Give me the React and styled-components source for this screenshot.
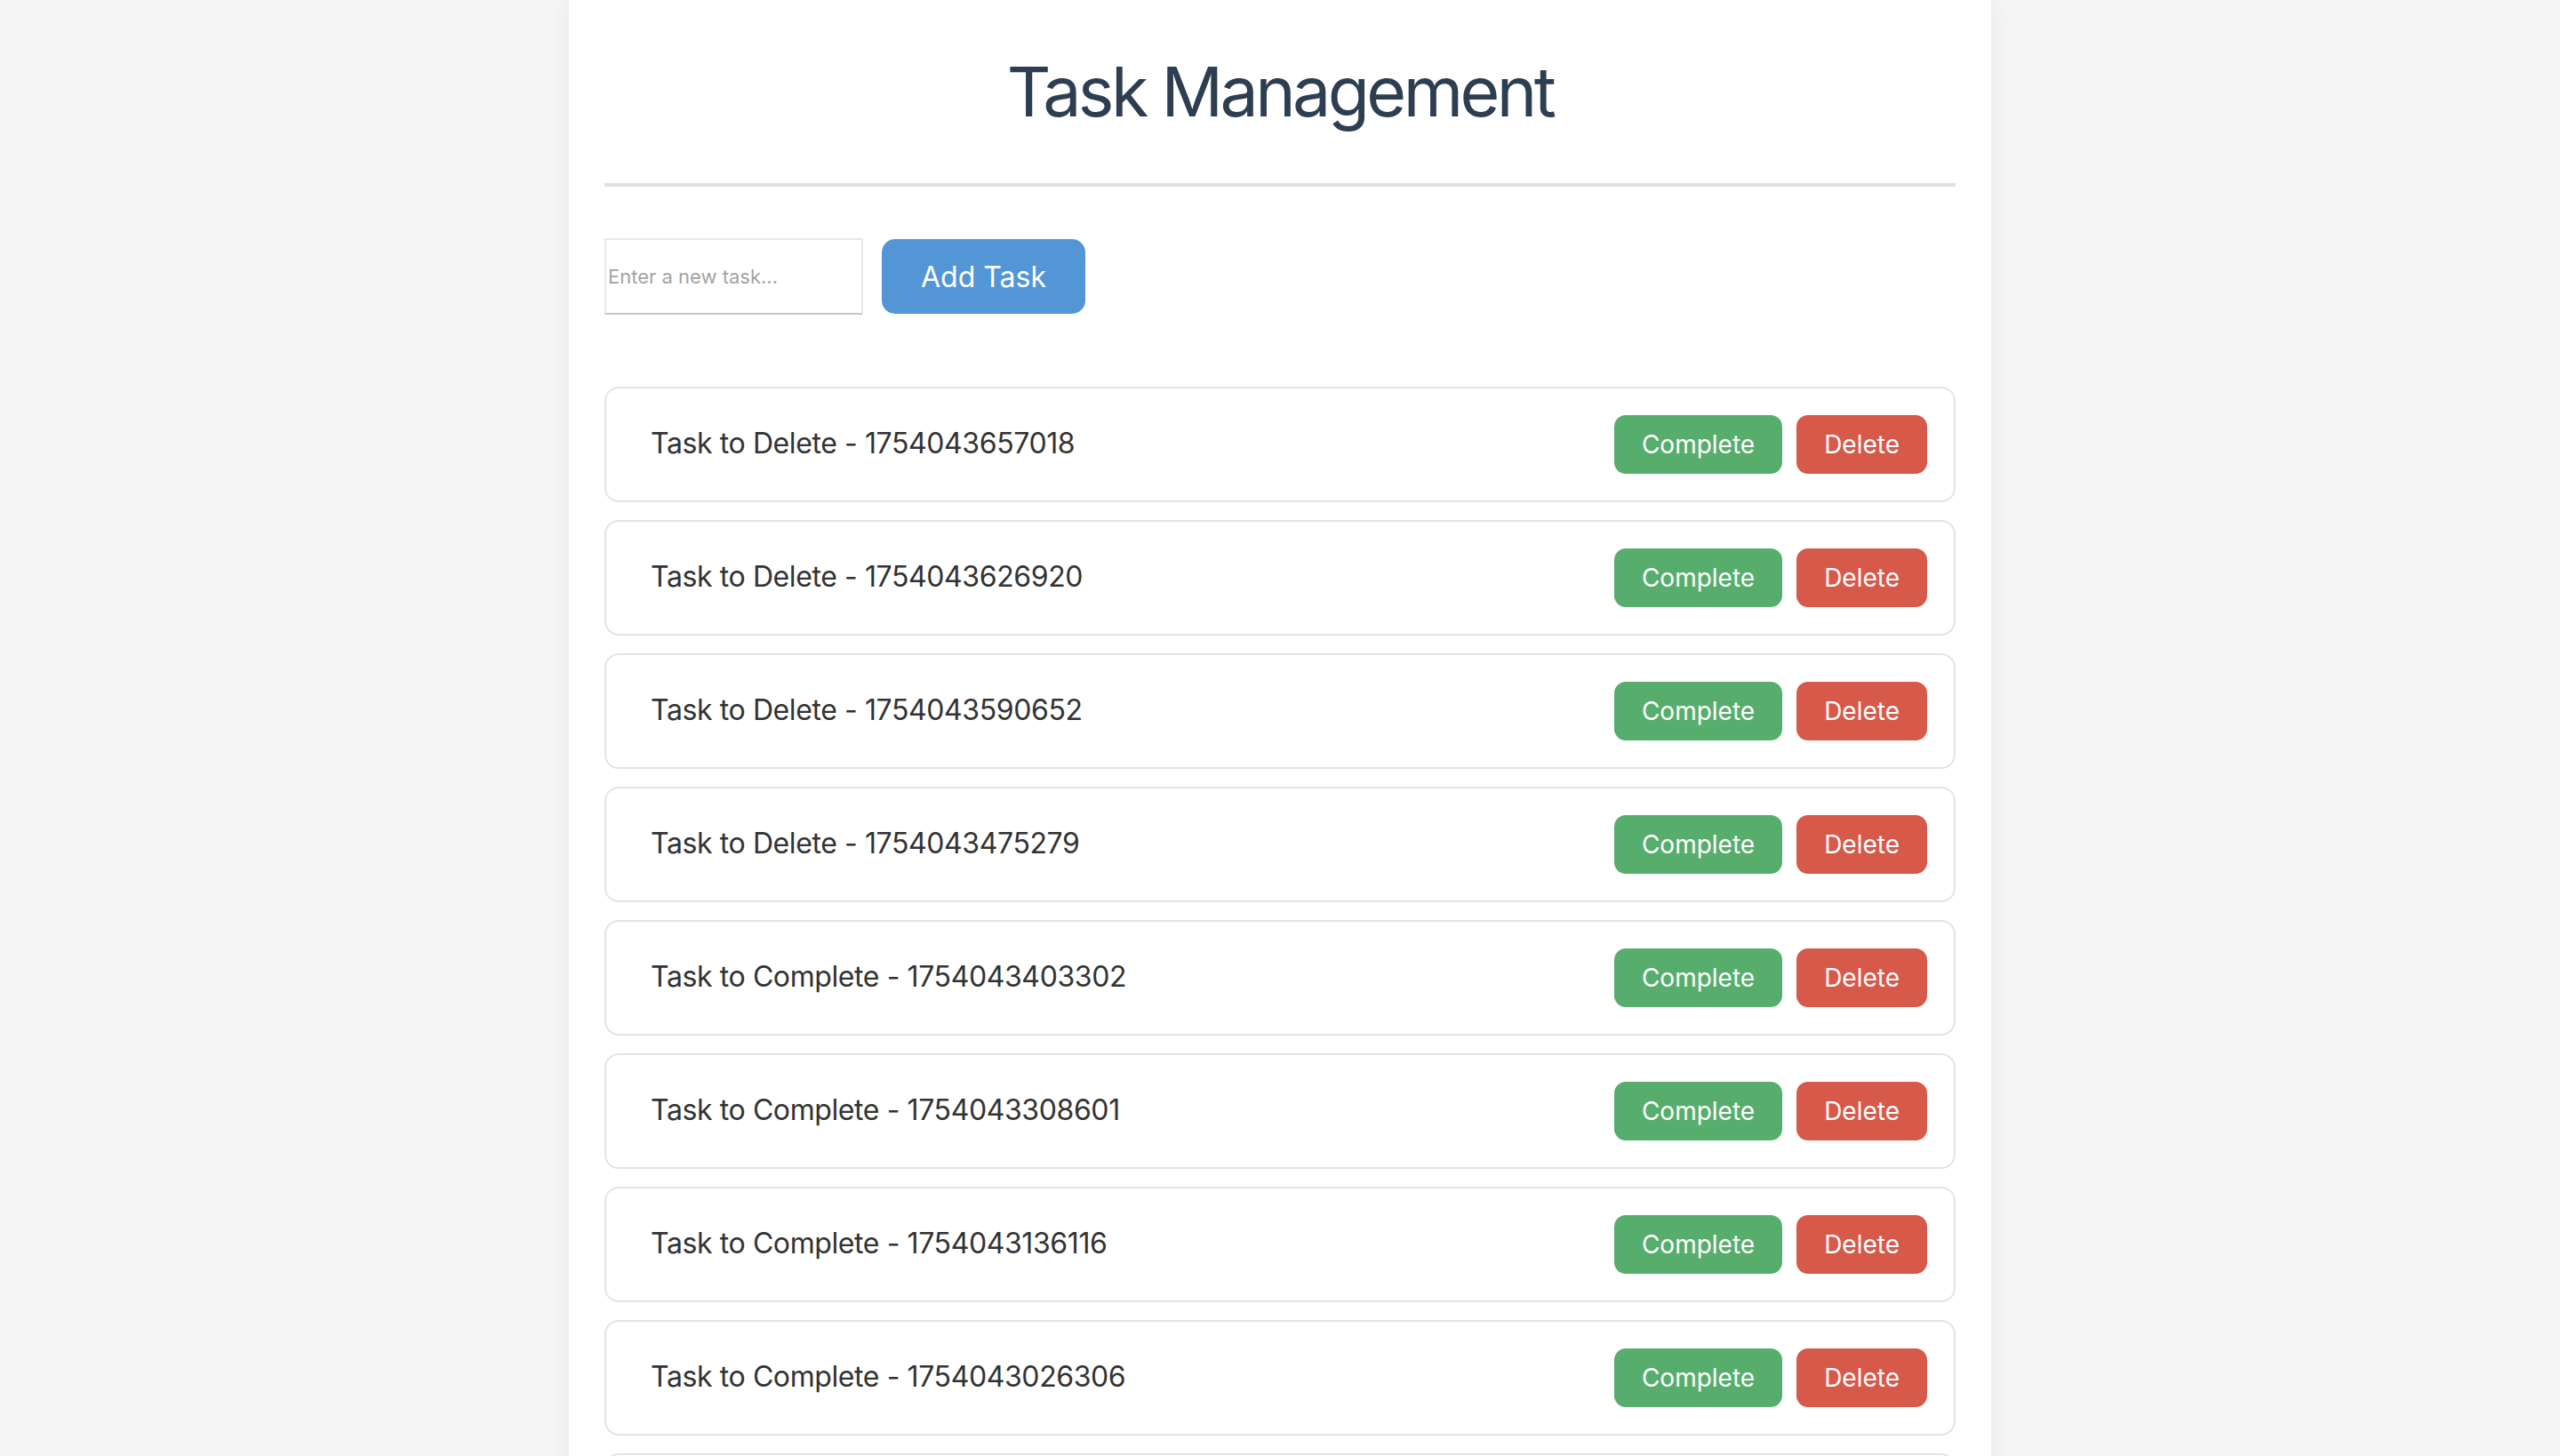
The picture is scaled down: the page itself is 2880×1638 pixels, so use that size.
import React from 'react';
import styled, { createGlobalStyle } from 'styled-components';

const GlobalStyle = createGlobalStyle`
  html, body {
    margin: 0;
    padding: 0;
    background: #f5f5f5;
    font-family: Inter, "Liberation Sans", sans-serif;
  }
  * {
    box-sizing: border-box;
  }
`;

const tasks = [
  'Task to Delete - 1754043657018',
  'Task to Delete - 1754043626920',
  'Task to Delete - 1754043590652',
  'Task to Delete - 1754043475279',
  'Task to Complete - 1754043403302',
  'Task to Complete - 1754043308601',
  'Task to Complete - 1754043136116',
  'Task to Complete - 1754043026306',
  'Task to Complete - 1754042917734',
];

const TaskItem = ({ title }) => {
  return (
    <Row>
      <TaskTitle>{title}</TaskTitle>
      <Actions>
        <ActionButton variant="complete">Complete</ActionButton>
        <ActionButton variant="delete">Delete</ActionButton>
      </Actions>
    </Row>
  );
};

const App = () => {
  const [text, setText] = React.useState('');

  return (
    <>
      <GlobalStyle />
      <Container>
        <Header>
          <Title>Task Management</Title>
        </Header>
        <Form onSubmit={(e) => e.preventDefault()}>
          <Input
            value={text}
            onChange={(e) => setText(e.target.value)}
            placeholder="Enter a new task..."
          />
          <AddButton type="submit">Add Task</AddButton>
        </Form>
        <List>
          {tasks.map((t) => (
            <TaskItem key={t} title={t} />
          ))}
        </List>
      </Container>
    </>
  );
};

const Container = styled.div`
  width: 1600px;
  margin: 0 auto;
  min-height: 100vh;
  padding: 0 40px;
  background: #fff;
  box-shadow: 0 0 24px rgba(0, 0, 0, 0.06);
`;

const Header = styled.header`
  padding: 56px 0;
  border-bottom: 4px solid #e0e0e0;
  text-align: center;
`;

const Title = styled.h1`
  margin: 0;
  font-size: 77px;
  line-height: 94px;
  font-weight: 400;
  letter-spacing: -3.6px;
  color: #2c3e50;
`;

const Form = styled.form`
  display: flex;
  align-items: center;
  gap: 21px;
  padding-top: 58px;
  margin-bottom: 81px;
`;

const Input = styled.input`
  width: 291px;
  height: 86px;
  padding: 0 2px;
  border: 2px solid #e8e8e8;
  border-bottom-color: #c6c6c6;
  font-family: inherit;
  font-size: 22px;
  color: #333;
  outline: none;

  &::placeholder {
    color: #a3a3a3;
  }
`;

const AddButton = styled.button`
  height: 84px;
  padding: 0 44px;
  border: none;
  border-radius: 15px;
  background: #5296d6;
  color: #fff;
  font-family: inherit;
  font-size: 32px;
  cursor: pointer;
`;

const List = styled.div`
  display: flex;
  flex-direction: column;
  gap: 20px;
`;

const Row = styled.div`
  display: flex;
  align-items: center;
  justify-content: space-between;
  padding: 30px 30px 30px 50px;
  border: 2px solid #e3e3e3;
  border-radius: 16px;
`;

const TaskTitle = styled.span`
  font-size: 32px;
  line-height: 36px;
  margin-top: -2px;
  letter-spacing: -0.4px;
  color: #333;
`;

const Actions = styled.div`
  display: flex;
  gap: 16px;
`;

const ActionButton = styled.button`
  height: 66px;
  padding: 0 31px;
  border: none;
  border-radius: 13px;
  background: ${(p) => (p.variant === 'delete' ? '#d6594a' : '#57ae6c')};
  color: #fff;
  font-family: inherit;
  font-size: 28px;
  cursor: pointer;
`;

export default App;
